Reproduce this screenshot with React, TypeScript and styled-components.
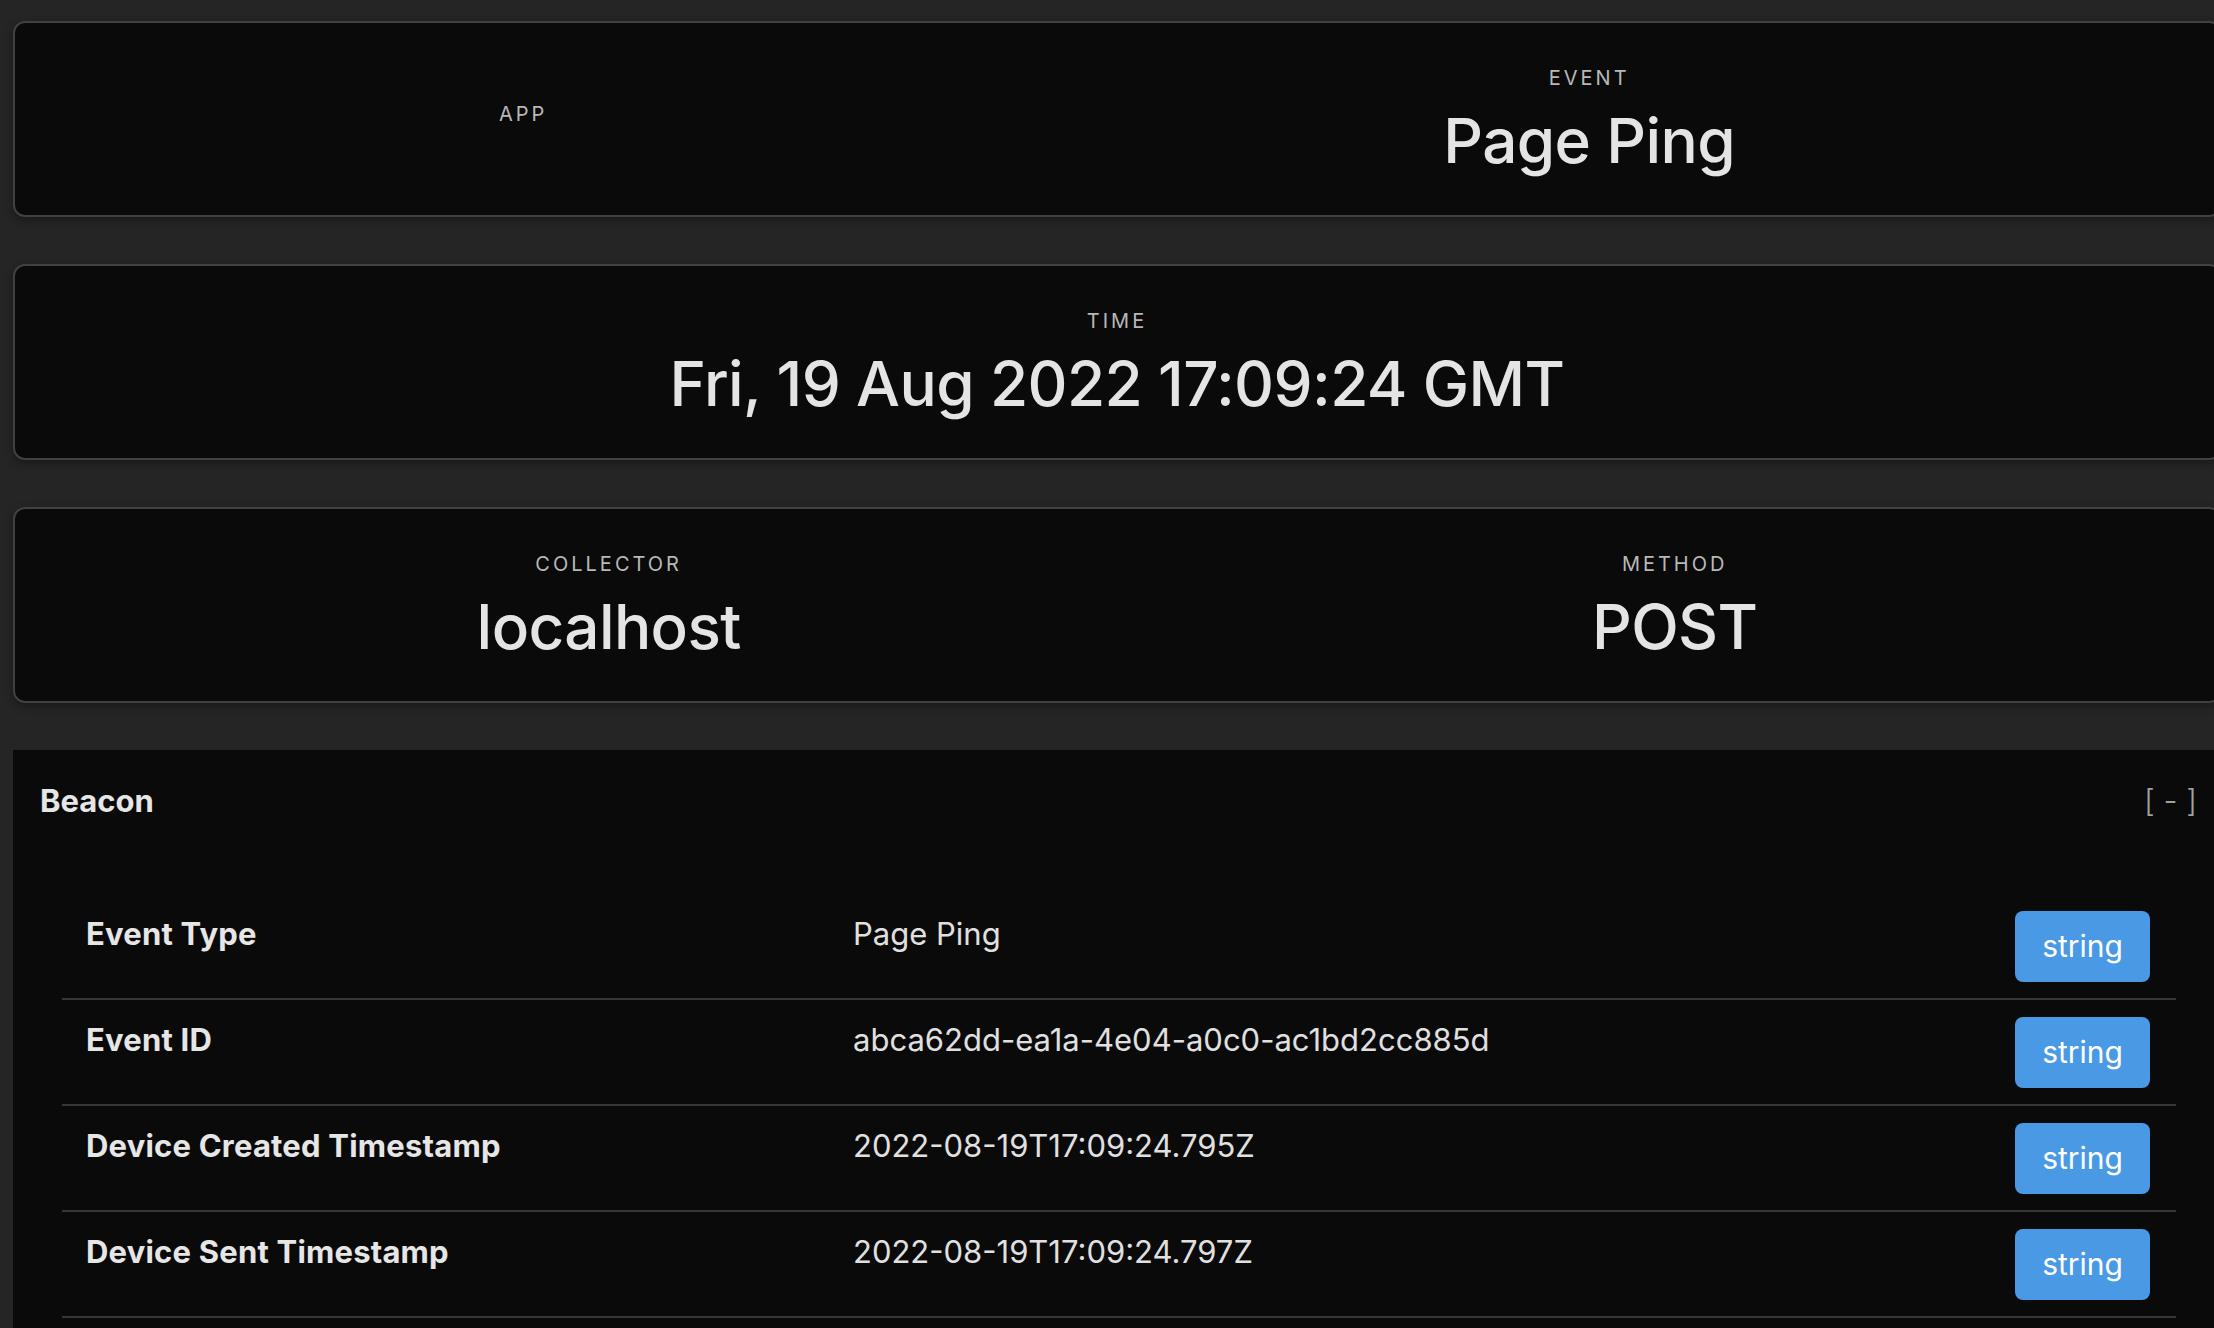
import React from 'react';
import styled, { createGlobalStyle } from 'styled-components';

const GlobalStyle = createGlobalStyle`
  html, body {
    margin: 0;
    padding: 0;
    overflow: hidden;
    background: #252525;
    font-family: Inter, "Noto Sans", "Liberation Sans", sans-serif;
    color: #e2e2e2;
  }
`;

const Page = styled.div`
  width: 2208px;
  padding: 21px 0 0 13px;
  display: flex;
  flex-direction: column;
  gap: 47px;
`;

const Card = styled.div`
  display: flex;
  justify-content: space-around;
  align-items: center;
  padding: 40px 36px 38px;
  background: #0a0a0a;
  border: 2px solid #414141;
  border-radius: 12px;
  box-shadow: 0 3px 8px rgba(0, 0, 0, 0.35);
`;

const Stat = styled.div`
  display: flex;
  flex-direction: column;
  align-items: center;
`;

const StatLabel = styled.div`
  font-size: 20px;
  line-height: 30px;
  letter-spacing: 3px;
  color: #b8b8b8;
  text-transform: uppercase;
  margin-bottom: 12px;
`;

const StatValue = styled.div`
  font-size: 62px;
  line-height: 72px;
  font-weight: 500;
  letter-spacing: -0.6px;
  color: #e4e4e4;
`;

const Panel = styled.section`
  background: #0a0a0a;
  padding-bottom: 60px;
`;

const PanelHeader = styled.div`
  display: flex;
  justify-content: space-between;
  align-items: center;
  padding: 28px 24px 27px 27px;
`;

const PanelTitle = styled.h3`
  margin: 0;
  font-size: 31px;
  line-height: 45px;
  font-weight: 700;
  color: #e6e6e6;
`;

const Toggle = styled.span`
  font-size: 31px;
  line-height: 45px;
  color: #a0a0a0;
  font-weight: 300;
  cursor: pointer;
`;

const Table = styled.div`
  margin: 44px 45px 0 49px;
`;

const Row = styled.div`
  display: grid;
  grid-template-columns: 767px 1fr auto;
  align-items: start;
  padding: 17px 26px 16px 24px;
  border-bottom: 2px solid #363636;
`;

const Key = styled.div`
  font-size: 31px;
  line-height: 45px;
  font-weight: 700;
  letter-spacing: 0.2px;
  color: #e6e6e6;
`;

const Value = styled.div`
  font-size: 31px;
  line-height: 45px;
  color: #e0e0e0;
`;

const TypeBadge = styled.span`
  display: inline-block;
  padding: 13px 27px;
  font-size: 30px;
  line-height: 45px;
  color: #ffffff;
  background: #4a99e5;
  border-radius: 8px;
`;

const rows = [
  { key: 'Event Type', value: 'Page Ping', type: 'string' },
  { key: 'Event ID', value: 'abca62dd-ea1a-4e04-a0c0-ac1bd2cc885d', type: 'string' },
  { key: 'Device Created Timestamp', value: '2022-08-19T17:09:24.795Z', type: 'string' },
  { key: 'Device Sent Timestamp', value: '2022-08-19T17:09:24.797Z', type: 'string' },
];

const App: React.FC = () => {
  return (
    <>
      <GlobalStyle />
      <Page>
        <Card>
          <Stat>
            <StatLabel>App</StatLabel>
          </Stat>
          <Stat>
            <StatLabel>Event</StatLabel>
            <StatValue>Page Ping</StatValue>
          </Stat>
        </Card>
        <Card>
          <Stat>
            <StatLabel>Time</StatLabel>
            <StatValue>Fri, 19 Aug 2022 17:09:24 GMT</StatValue>
          </Stat>
        </Card>
        <Card>
          <Stat>
            <StatLabel>Collector</StatLabel>
            <StatValue>localhost</StatValue>
          </Stat>
          <Stat>
            <StatLabel>Method</StatLabel>
            <StatValue>POST</StatValue>
          </Stat>
        </Card>
        <Panel>
          <PanelHeader>
            <PanelTitle>Beacon</PanelTitle>
            <Toggle>[ - ]</Toggle>
          </PanelHeader>
          <Table>
            {rows.map((row) => (
              <Row key={row.key}>
                <Key>{row.key}</Key>
                <Value>{row.value}</Value>
                <TypeBadge>{row.type}</TypeBadge>
              </Row>
            ))}
          </Table>
        </Panel>
      </Page>
    </>
  );
};

export default App;
